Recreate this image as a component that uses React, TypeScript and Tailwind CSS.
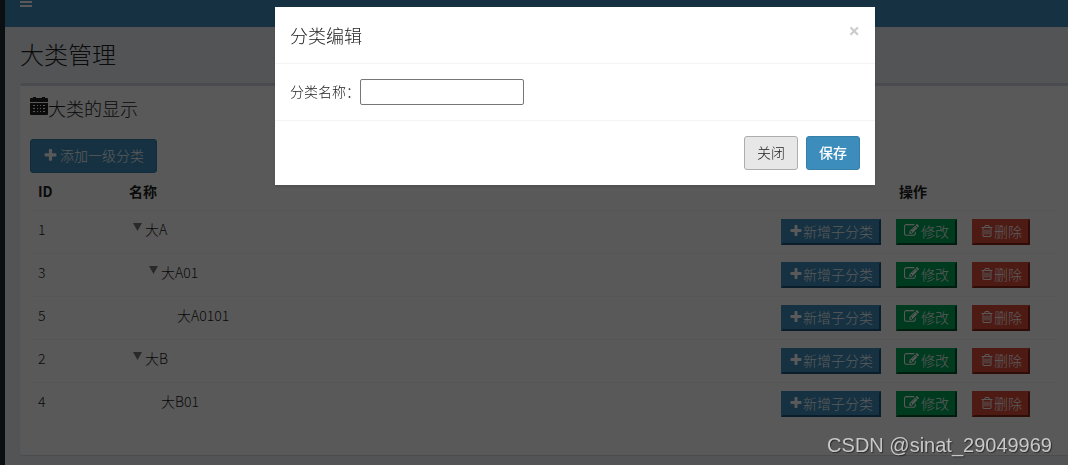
import { useState } from 'react';

type Category = {
    id: number;
    name: string;
    level: number;
    hasChildren: boolean;
};

const categories: Category[] = [
    { id: 1, name: '大A', level: 0, hasChildren: true },
    { id: 3, name: '大A01', level: 1, hasChildren: true },
    { id: 5, name: '大A0101', level: 2, hasChildren: false },
    { id: 2, name: '大B', level: 0, hasChildren: true },
    { id: 4, name: '大B01', level: 1, hasChildren: false },
];

const indentCls = ['pl-3', 'pl-7', 'pl-11'];

const btnCls = 'h-[34px] rounded-[3px] border px-3 pb-0.5';
const rowBtnCls = 'mr-[15px] inline-flex h-[26px] items-center border-2 border-t-transparent border-l-transparent px-1.5 pb-0.5 text-white';

// Font Awesome 4 outlines
const iconPaths = {
    plus: 'M1600 736v192q0 40-28 68t-68 28h-416v416q0 40-28 68t-68 28h-192q-40 0-68-28t-28-68v-416h-416q-40 0-68-28t-28-68v-192q0-40 28-68t68-28h416v-416q0-40 28-68t68-28h192q40 0 68 28t28 68v416h416q40 0 68 28t28 68z',
    edit: 'M888 1184l116-116-152-152-116 116v56h96v96h56zm440-720q-16-16-33 1l-350 350q-17 17-1 33t33-1l350-350q17-17 1-33zm80 594v190q0 119-84.500 203.500t-203.500 84.500h-832q-119 0-203.500-84.500t-84.500-203.500v-832q0-119 84.500-203.500t203.500-84.500h832q63 0 117 25 15 7 18 23 3 17-9 29l-49 49q-14 14-32 8-23-6-45-6h-832q-66 0-113 47t-47 113v832q0 66 47 113t113 47h832q66 0 113-47t47-113v-126q0-13 9-22l64-64q15-15 35-7t20 29zm-96-738l288 288-672 672h-288v-288zm444 132l-92 92-288-288 92-92q28-28 68-28t68 28l152 152q28 28 28 68t-28 68z',
    trash: 'M704 736v576q0 14-9 23t-23 9h-64q-14 0-23-9t-9-23v-576q0-14 9-23t23-9h64q14 0 23 9t9 23zm256 0v576q0 14-9 23t-23 9h-64q-14 0-23-9t-9-23v-576q0-14 9-23t23-9h64q14 0 23 9t9 23zm256 0v576q0 14-9 23t-23 9h-64q-14 0-23-9t-9-23v-576q0-14 9-23t23-9h64q14 0 23 9t9 23zm128 724v-948h-896v948q0 22 7 40.500t14.500 27 10.500 8.500h832q3 0 10.500-8.500t14.500-27 7-40.500zm-672-1076h448l-48-117q-7-9-17-11h-317q-10 2-17 11zm928 32v64q0 14-9 23t-23 9h-96v948q0 83-47 143.500t-113 60.500h-832q-66 0-113-58.500t-47-141.500v-952h-96q-14 0-23-9t-9-23v-64q0-14 9-23t23-9h309l70-167q15-37 54-63t79-26h320q40 0 79 26t54 63l70 167h309q14 0 23 9t9 23z',
};

function Icon({ name, className }: { name: keyof typeof iconPaths; className: string }) {
    return (
        <svg viewBox="0 0 1792 1792" className={className} fill="currentColor" aria-hidden="true">
            <path d={iconPaths[name]} />
        </svg>
    );
}

function CalendarIcon() {
    return (
        <svg viewBox="0 0 18 18" className="mb-1 h-[18px] w-[18px]" fill="currentColor" aria-hidden="true">
            <path d="M0 2q0-1 1-1h2V0h3v1h6V0h3v1h2q1 0 1 1v3H0z" />
            <path fillRule="evenodd" d="M0 6h18v11q0 1-1 1H1q-1 0-1-1zM3 8v1h2V8zm4 0v1h1V8zm3 0v1h1V8zm3 0v1h2V8zM3 11v1h2v-1zm4 0v1h1v-1zm3 0v1h1v-1zm3 0v1h2v-1zM3 14v1h2v-1zm4 0v1h1v-1zm3 0v1h1v-1zm3 0v1h2v-1z" />
        </svg>
    );
}

function CategoryRow({ category }: { category: Category }) {
    return (
        <tr className="h-[43px] border-t border-[#f4f4f4] align-top">
            <td className="px-2 pt-2 leading-5">{category.id}</td>
            <td className="pt-2 leading-5">
                <div className={`flex ${indentCls[category.level]}`}>
                    <span className="w-3 shrink-0 pt-1">
                        {category.hasChildren && (
                            <svg viewBox="0 0 9 8" className="h-2 w-[9px]" fill="#777" aria-hidden="true">
                                <path d="M0 0h9L4.500 8z" />
                            </svg>
                        )}
                    </span>
                    <span>{category.name}</span>
                </div>
            </td>
            <td className="pt-2">
                <div className="flex justify-center whitespace-nowrap">
                    <button type="button" className={`${rowBtnCls} border-r-[#1d5578] border-b-[#1d5578] bg-[#3c8dbc]`}>
                        <Icon name="plus" className="h-3.5 w-3.5" />新增子分类
                    </button>
                    <button type="button" className={`${rowBtnCls} gap-0.5 border-r-[#00502b] border-b-[#00502b] bg-[#00a65a]`}>
                        <Icon name="edit" className="h-[15px] w-[15px]" />修改
                    </button>
                    <button type="button" className={`${rowBtnCls} border-r-[#83271b] border-b-[#83271b] bg-[#dd4b39]`}>
                        <Icon name="trash" className="h-3.5 w-3.5" />删除
                    </button>
                </div>
            </td>
        </tr>
    );
}

function CategoryModal({ onClose }: { onClose: () => void }) {
    const [name, setName] = useState('');

    return (
        <div className="fixed inset-0 z-10 bg-black/65 pt-[7px] pr-4 pl-[98px]">
            <div role="dialog" aria-labelledby="modal-title" className="mx-auto max-w-[600px] bg-white shadow-[0_2px_3px_rgba(0,0,0,0.125)]">
                <div className="flex items-start justify-between border-b border-[#f4f4f4] p-[15px]">
                    <h4 id="modal-title" className="text-lg leading-[26px]">分类编辑</h4>
                    <button type="button" aria-label="关闭" onClick={onClose} className="pt-px font-['Noto_Sans',sans-serif] text-xl leading-4 font-bold text-[#ccc]">
                        ×
                    </button>
                </div>
                <div className="flex items-center p-[15px]">
                    <label htmlFor="category-name" className="pb-0.5">分类名称：</label>
                    <input
                        id="category-name"
                        type="text"
                        value={name}
                        onChange={e => setName(e.target.value)}
                        className="h-[26px] w-[164px] rounded-xs border border-[#767676] bg-white px-1"
                    />
                </div>
                <div className="flex justify-end gap-2 border-t border-[#f4f4f4] p-[15px]">
                    <button type="button" onClick={onClose} className={`${btnCls} border-[#adadad] bg-[#e7e7e7]`}>
                        关闭
                    </button>
                    <button type="button" className={`${btnCls} border-[#367fa9] bg-[#3c8dbc] font-medium text-white`}>
                        保存
                    </button>
                </div>
            </div>
        </div>
    );
}

export default function App() {
    const [open, setOpen] = useState(true);

    return (
        <div className="flex min-h-screen overflow-hidden bg-[#ecf0f5] font-['Noto_Sans_CJK_SC',sans-serif] text-sm font-light text-[#222]">
            <aside className="w-[5px] shrink-0 bg-[#222d32]" />
            <div className="flex min-w-0 flex-1 flex-col">
                <header className="flex h-[27px] items-start bg-[#3c8dbc] px-[15px] text-white">
                    <button type="button" aria-label="菜单" className="-mt-[3px]">
                        <svg viewBox="0 0 12 10" className="h-2.5 w-3" fill="currentColor" aria-hidden="true">
                            <path d="M0 0h12v2H0zM0 4h12v2H0zM0 8h12v2H0z" />
                        </svg>
                    </button>
                </header>
                <main className="flex-1 pt-[11px] pl-[15px]">
                    <h1 className="text-2xl leading-8">大类管理</h1>
                    <section className="mt-[13px] rounded-l-[3px] border-t-[3px] border-[#d2d6de] bg-white p-2.5 pb-[30px] shadow-[0_1px_1px_rgba(0,0,0,0.1)]">
                        <h3 className="flex items-center text-lg leading-6">
                            <CalendarIcon />大类的显示
                        </h3>
                        <button
                            type="button"
                            onClick={() => setOpen(true)}
                            className={`${btnCls} mt-[19px] flex items-center gap-0.5 border-[#367fa9] bg-[#3c8dbc] text-white`}
                        >
                            <Icon name="plus" className="h-[15px] w-[15px]" />添加一级分类
                        </button>
                        <table className="w-full table-fixed">
                            <thead>
                                <tr className="h-[37px] align-top">
                                    <th className="w-[91px] px-2 pt-2 text-left leading-5">ID</th>
                                    <th className="px-2 pt-2 text-left leading-5">名称</th>
                                    <th className="w-[290px] pt-2 leading-5">操作</th>
                                </tr>
                            </thead>
                            <tbody>
                                {categories.map(c => <CategoryRow key={c.id} category={c} />)}
                            </tbody>
                        </table>
                    </section>
                </main>
            </div>
            {open && <CategoryModal onClose={() => setOpen(false)} />}
            <span className="fixed right-4 bottom-1.5 z-20 font-['Liberation_Sans',sans-serif] text-xl font-normal text-[#c8c8c8] [text-shadow:1px_1px_1px_rgba(0,0,0,0.5)]">
                CSDN @sinat_29049969
            </span>
        </div>
    );
}
